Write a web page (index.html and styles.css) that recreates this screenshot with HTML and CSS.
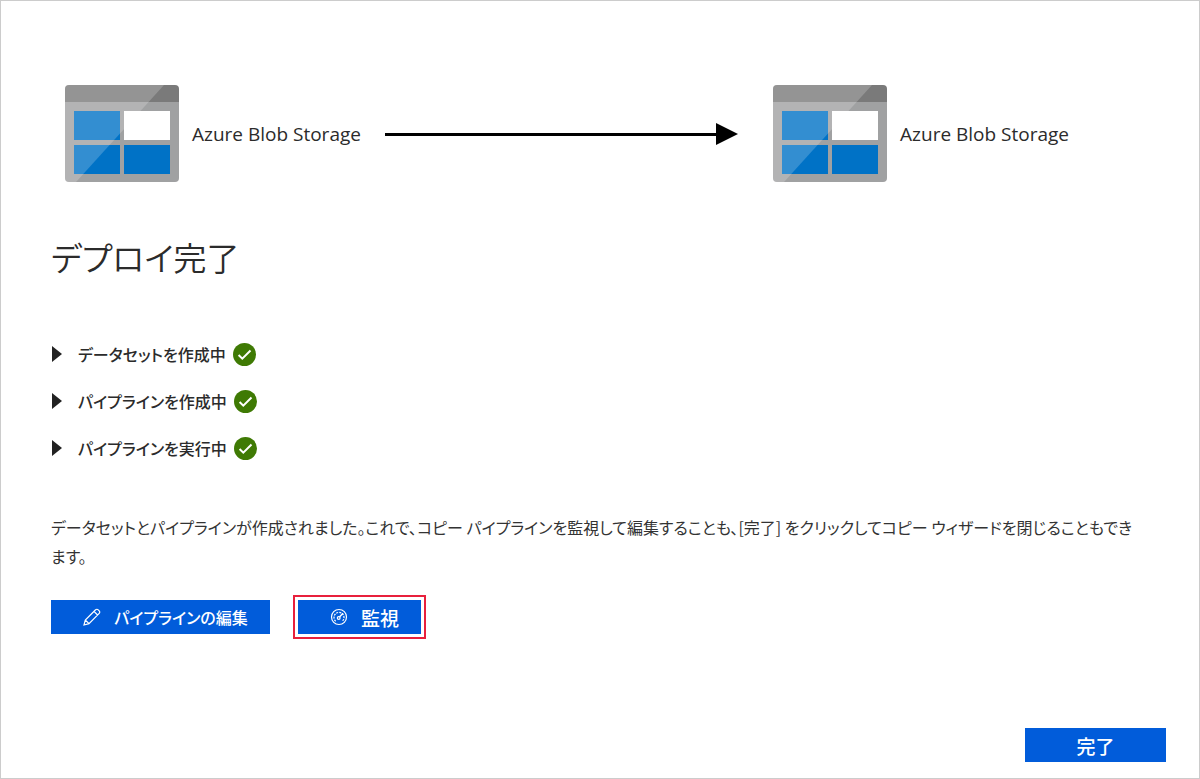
FILE: index.html
```html
<!DOCTYPE html>
<html lang="ja">
<head>
<meta charset="utf-8">
<meta name="viewport" content="width=device-width, initial-scale=1">
<title>デプロイ完了</title>
<link rel="stylesheet" href="styles.css">
</head>
<body>
<svg class="defs" width="0" height="0" aria-hidden="true">
  <symbol id="blob" viewBox="0 0 114 98">
    <path fill="#a0a1a2" d="M0 17h114v76a4 4 0 0 1-4 4H4a4 4 0 0 1-4-4z"/>
    <path fill="#7a7a7a" d="M4 0h106a4 4 0 0 1 4 4v13H0V4a4 4 0 0 1 4-4z"/>
    <path fill="#0072c6" d="M9 26h46v29H9zM9 60h46v29H9zM59 60h46v29H59z"/>
    <path fill="#fff" d="M59 26h46v29H59z"/>
    <path fill="#fff" fill-opacity=".2" d="M4 0h95L11 97H4a4 4 0 0 1-4-4V4a4 4 0 0 1 4-4z"/>
  </symbol>
  <symbol id="check" viewBox="0 0 23 23">
    <circle cx="11.5" cy="11.5" r="11.5" fill="#3f7a04"/>
    <path d="M5.6 12l3.7 3.7 8.2-8.2" fill="none" stroke="#fff" stroke-width="2"/>
  </symbol>
</svg>
<main class="panel">
  <section class="flow">
    <svg class="store-icon" aria-hidden="true"><use href="#blob"/></svg>
    <span class="store-name">Azure Blob Storage</span>
    <div class="arrow"></div>
    <svg class="store-icon" aria-hidden="true"><use href="#blob"/></svg>
    <span class="store-name">Azure Blob Storage</span>
  </section>

  <h1 class="title">デプロイ完了</h1>

  <div class="steps">
    <details><summary class="step"><span class="step-name">データセットを作成中</span><svg class="check" aria-hidden="true"><use href="#check"/></svg></summary></details>
    <details><summary class="step"><span class="step-name">パイプラインを作成中</span><svg class="check" aria-hidden="true"><use href="#check"/></svg></summary></details>
    <details><summary class="step"><span class="step-name">パイプラインを実行中</span><svg class="check" aria-hidden="true"><use href="#check"/></svg></summary></details>
  </div>

  <p class="message">データセットとパイプラインが作成されました。これで、コピー パイプラインを監視して編集することも、[完了] をクリックしてコピー ウィザードを閉じることもでき<br>ます。</p>

  <div class="actions">
    <button class="button edit" type="button">
      <svg class="button-icon" viewBox="0 0 18 18" fill="none" stroke="#fff" stroke-width="1.2" aria-hidden="true"><path d="M1 17l1.300-5L12.600 1.800a1.800 1.800 0 0 1 2.600 0l1 1a1.800 1.800 0 0 1 0 2.600L6 15.700zM2.300 12L6 15.700M11 3.400L14.600 7"/></svg>
      <span>パイプラインの編集</span>
    </button>
    <div class="highlight">
      <button class="button monitor" type="button">
        <svg class="button-icon" viewBox="0 0 18 18" fill="none" stroke="#fff" stroke-width="1.2" aria-hidden="true"><circle cx="9" cy="9" r="7.500"/><path d="M5.700 13.200A5 5 0 1 1 12.300 13.200" stroke-dasharray="2 1"/><circle cx="8.700" cy="10" r="1.400"/><path d="M9.500 9L13 5.200" stroke-width="1.400"/></svg>
        <span>監視</span>
      </button>
    </div>
  </div>

  <footer class="footer"><button class="button done" type="button">完了</button></footer>
</main>
</body>
</html>
```
FILE: styles.css
```css
* { box-sizing: border-box; }
body {
  margin: 0;
  color: #2b2b2b;
  background: #fff;
  font-family: "Noto Sans CJK JP", sans-serif;
  font-size: 16px;
  font-feature-settings: "palt";
}
.defs { position: absolute; }
.panel {
  display: flex;
  flex-direction: column;
  min-height: 100vh;
  padding: 84px 33px 16px 50px;
  border: 1px solid #ccc;
}
.flow {
  display: flex;
  align-items: center;
  padding: 0 97px 0 14px;
}
.store-icon { flex: none; width: 114px; height: 98px; }
.store-name {
  margin-left: 13px;
  font-family: "Open Sans", "Noto Sans", sans-serif;
  font-size: 19px;
  white-space: nowrap;
}
.arrow {
  display: flex;
  flex: 1;
  align-items: center;
  margin: 0 35px 0 24px;
}
.arrow::before { content: ""; flex: 1; height: 3px; background: #000; }
.arrow::after {
  content: "";
  border: 11px solid transparent;
  border-left: 22px solid #000;
  border-right: 0;
}
.title {
  margin: 46px 0 0;
  font-size: 33px;
  font-weight: 350;
  line-height: 56px;
}
.steps {
  display: grid;
  gap: 17px;
  margin-top: 54px;
}
.step {
  display: flex;
  align-items: center;
  list-style: none;
  line-height: 30px;
  font-weight: 500;
  cursor: pointer;
}
.step::-webkit-details-marker { display: none; }
.step::before {
  content: "";
  margin: 0 16px 0 1px;
  border: 8px solid transparent;
  border-left: 10px solid #222;
  border-right: 0;
}
.check { width: 23px; height: 23px; margin-left: 7px; }
.message {
  margin: 50px 0 0;
  color: #333;
  font-weight: 400;
  line-height: 29px;
}
.actions {
  display: flex;
  align-items: center;
  gap: 23px;
  margin-top: 24px;
}
.highlight { padding: 3px; border: 2px solid #e8203c; }
.button {
  display: flex;
  align-items: center;
  justify-content: center;
  gap: 13px;
  height: 34px;
  padding: 0 22px 0 32px;
  border: 0;
  color: #fff;
  background: #015cda;
  font: inherit;
  font-feature-settings: inherit;
  font-weight: 500;
  cursor: pointer;
}
.button-icon { width: 18px; height: 18px; }
.edit { min-width: 219px; }
.monitor { font-size: 19px; }
.done { min-width: 141px; padding: 0 22px; font-size: 19px; }
.footer {
  display: flex;
  justify-content: flex-end;
  margin-top: auto;
}
```
